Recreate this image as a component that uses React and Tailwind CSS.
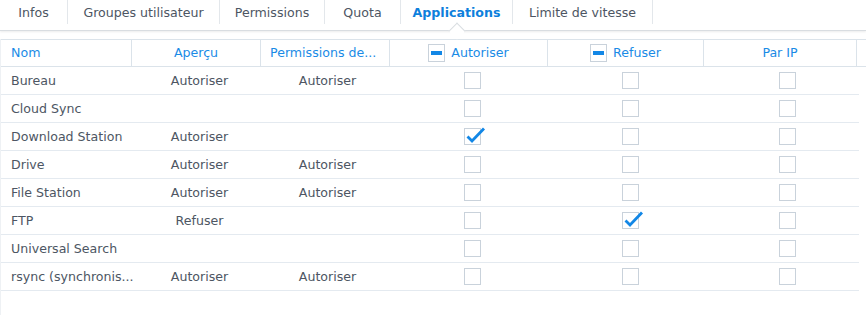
import { useState } from "react";

const TABS = [
  { label: "Infos", w: "w-[68px]" },
  { label: "Groupes utilisateur", w: "w-[152px]" },
  { label: "Permissions", w: "w-[105px]" },
  { label: "Quota", w: "w-[76px]" },
  { label: "Applications", w: "w-[112px]", active: true },
  { label: "Limite de vitesse", w: "w-[140px]" },
];

const ROWS = [
  { name: "Bureau", preview: "Autoriser", perm: "Autoriser", allow: false, deny: false },
  { name: "Cloud Sync", preview: "", perm: "", allow: false, deny: false },
  { name: "Download Station", preview: "Autoriser", perm: "", allow: true, deny: false },
  { name: "Drive", preview: "Autoriser", perm: "Autoriser", allow: false, deny: false },
  { name: "File Station", preview: "Autoriser", perm: "Autoriser", allow: false, deny: false },
  { name: "FTP", preview: "Refuser", perm: "", allow: false, deny: true },
  { name: "Universal Search", preview: "", perm: "", allow: false, deny: false },
  { name: "rsync (synchronis...", preview: "Autoriser", perm: "Autoriser", allow: false, deny: false },
];

const GRID = "grid grid-cols-[131px_129px_129px_158px_156px_153px_1fr]";

const Box = ({ checked }) => (
  <span className="relative block w-[17px] h-[17px] border border-[#c9d2db] bg-white">
    {checked && (
      <svg
        className="absolute left-[1px] top-[-3px]"
        width="20"
        height="19"
        viewBox="0 0 20 19"
      >
        <path
          d="M1.5 10.5 L6 15 L18 2.5"
          fill="none"
          stroke="#1287e6"
          strokeWidth="2.8"
          strokeLinejoin="miter"
        />
      </svg>
    )}
  </span>
);

const MinusBox = () => (
  <span className="flex items-center justify-center w-[17px] h-[18px] border border-[#c9d2db] bg-white">
    <span className="block w-[11px] h-[4px] bg-[#1287e6]" />
  </span>
);

const App = () => {
  const [rows] = useState(ROWS);

  return (
    <div className="w-[866px] h-[315px] bg-white overflow-hidden text-[12.6px] text-[#4d5663] font-['DejaVu_Sans',Verdana,sans-serif]">
      <div className="relative h-[31px] flex border-b border-[#d9dde1] shadow-[0_1px_2px_rgba(0,0,0,0.08)]">
        {TABS.map((tab) => (
          <div
            key={tab.label}
            className={`relative ${tab.w} shrink-0 flex justify-center pt-[5px] h-[24px] border-r border-[#e3e7eb] ${
              tab.active ? "font-bold text-[#0d7fdc]" : ""
            }`}
          >
            <span className="leading-[16px] whitespace-nowrap">{tab.label}</span>
            {tab.active && (
              <span className="absolute left-1/2 -translate-x-1/2 top-[25px] w-[12px] h-[12px] rotate-45 bg-white border-l border-t border-[#d9dde1]" />
            )}
          </div>
        ))}
      </div>

      <div className="mt-[8px] border-l border-[#eef1f4] h-[276px]">
        <div className={`${GRID} h-[28px] border-y border-[#dbe3ea] text-[#1a8be6]`}>
          <div className="flex items-center pt-[1px] pl-[10px] border-r border-[#dbe3ea]">Nom</div>
          <div className="flex items-center pt-[1px] justify-center border-r border-[#dbe3ea]">Aperçu</div>
          <div className="flex items-center pt-[1px] pl-[9px] border-r border-[#dbe3ea] whitespace-nowrap">
            Permissions de...
          </div>
          <div className="flex items-center justify-center gap-[6px] border-r border-[#dbe3ea]">
            <MinusBox />
            <span className="pt-[1px]">Autoriser</span>
          </div>
          <div className="flex items-center justify-center gap-[6px] border-r border-[#dbe3ea]">
            <MinusBox />
            <span className="pt-[1px]">Refuser</span>
          </div>
          <div className="flex items-center pt-[1px] justify-center border-r border-[#dbe3ea]">Par IP</div>
          <div />
        </div>

        <div className="w-[858px]">
          {rows.map((row) => (
            <div key={row.name} className={`${GRID} h-[28px] border-b border-[#e4eaf0]`}>
              <div className="flex items-center pt-[2px] pl-[10px] whitespace-nowrap">{row.name}</div>
              <div className="flex items-center pt-[2px] justify-center pl-[6px]">{row.preview}</div>
              <div className="flex items-center pt-[2px] justify-center pl-[4px]">{row.perm}</div>
              <div className="flex items-center justify-center pl-[7px]">
                <Box checked={row.allow} />
              </div>
              <div className="flex items-center justify-center pl-[8px]">
                <Box checked={row.deny} />
              </div>
              <div className="flex items-center justify-center pl-[13px]">
                <Box checked={false} />
              </div>
              <div />
            </div>
          ))}
        </div>
      </div>
    </div>
  );
};

export default App;
